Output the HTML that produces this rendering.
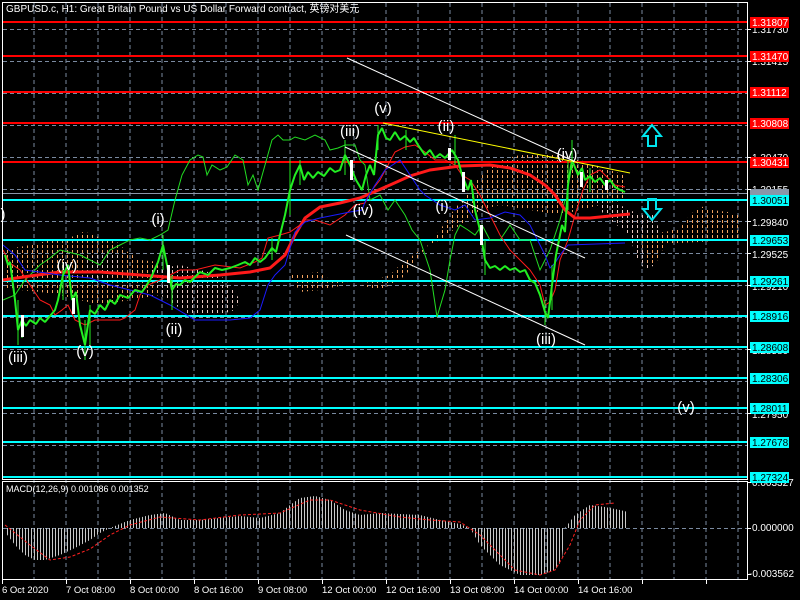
<!DOCTYPE html>
<html><head><meta charset="utf-8"><style>
html,body{margin:0;padding:0;background:#000;width:800px;height:600px;overflow:hidden}
svg{display:block}
text{font-family:"Liberation Sans","Noto Sans CJK SC",sans-serif}
</style></head><body>
<svg width="800" height="600" viewBox="0 0 800 600" xmlns="http://www.w3.org/2000/svg">
<defs>
<pattern id="cl" width="5" height="5" patternUnits="userSpaceOnUse"><line x1="2.5" y1="0" x2="2.5" y2="3" stroke="#f4a460" stroke-width="1"/></pattern>
<pattern id="cl2" width="5" height="5" patternUnits="userSpaceOnUse"><line x1="2.5" y1="0" x2="2.5" y2="3" stroke="#e8c8c0" stroke-width="1"/></pattern>
<pattern id="hs" width="3" height="4" patternUnits="userSpaceOnUse"><line x1="1.5" y1="0" x2="1.5" y2="4" stroke="#c8c8c8" stroke-width="1"/></pattern>
</defs>
<rect width="800" height="600" fill="#000"/>
<g stroke="#7a8aa0" stroke-width="1" stroke-dasharray="4,3">
<path d="M34 3V579M66 3V579M98 3V579M130 3V579M162 3V579M194 3V579M226 3V579M258 3V579M290 3V579M322 3V579M354 3V579M386 3V579M418 3V579M450 3V579M482 3V579M514 3V579M546 3V579M578 3V579M610 3V579M642 3V579M674 3V579M706 3V579M738 3V579"/>
<path d="M3 29.5H747M3 61.5H747M3 93.5H747M3 125.5H747M3 157.5H747M3 189.5H747M3 221.5H747M3 253.5H747M3 285.5H747M3 317.5H747M3 349.5H747M3 381.5H747M3 413.5H747M3 445.5H747M3 528.5H747"/>
</g>
<g>
<polygon fill="url(#cl)" points="3,250 30,245 50,240 70,238 80,232 90,233 100,238 115,240 125,250 140,260 160,262 165,275 160,295 130,300 100,305 80,300 60,295 40,292 20,290 3,288"/>
<polygon fill="url(#cl2)" points="85,258 105,252 118,253 120,265 110,280 95,285 85,275"/>
<polygon fill="url(#cl2)" points="150,270 180,265 200,270 220,275 230,285 240,300 235,310 210,318 190,315 175,305 160,295"/>
<polygon fill="url(#cl)" points="290,275 320,272 330,280 360,285 380,290 400,280 410,270 420,255 440,230 450,215 470,190 480,175 500,160 520,155 560,155 580,160 610,170 625,175 625,200 600,205 580,210 560,215 530,210 500,205 480,210 460,225 440,240 420,250 400,265 390,275 370,282 345,285 320,290 300,292"/>
<polygon fill="url(#cl2)" points="595,200 620,205 640,215 655,215 660,235 655,265 645,270 635,255 630,235 610,220 600,210"/>
<polygon fill="url(#cl)" points="640,235 665,232 680,228 690,215 700,206 712,210 728,212 740,215 740,238 725,240 700,242 680,243 665,245 655,265 645,262"/>
</g>
<g stroke="#ff0000" stroke-width="2">
<path d="M3 22H747M3 56H747M3 92H747M3 123H747M3 162H747"/>
</g>
<path d="M3 193.5H747" stroke="#8a96a8" stroke-width="1"/>
<g stroke="#00ffff" stroke-width="2">
<path d="M3 200H747M3 240H747M3 281H747M3 316H747M3 347H747M3 378H747M3 408H747M3 442H747M3 477H747"/>
</g>
<polyline fill="none" stroke="#22dd22" stroke-width="1" points="3,300 15,295 25,280 40,265 50,258 60,250 80,255 100,265 110,250 120,245 130,240 140,238 150,240 160,235 168,230 175,200 182,175 190,160 198,155 203,157 207,175 212,165 220,170 227,167 235,155 243,160 248,185 253,175 258,190 265,165 272,140 278,135 283,140 290,140 295,137 305,140 315,135 325,140 330,150 338,148 345,145 355,145 360,160 365,165 370,200 380,195 388,210 395,200 405,215 412,230 420,240 430,270 437,317 445,290 450,260 455,235 460,225 468,230 475,235 482,225 490,240 500,240 510,225 520,240 530,240 540,270 550,250 560,220 565,200"/>
<polyline fill="none" stroke="#ff1a1a" stroke-width="3" points="3,280 30,276 60,272 100,272 140,275 180,278 220,275 250,272 270,268 285,255 295,235 305,218 320,207 340,203 360,198 390,185 410,176 430,170 460,166 490,165 510,168 530,175 545,185 555,195 565,210 575,218 590,218 610,216 630,214"/>
<polyline fill="none" stroke="#ff1a1a" stroke-width="1" points="3,250 10,263 20,270 30,285 40,300 50,305 55,315 62,310 68,305 75,320 85,325 95,320 120,320 125,318 135,310 140,295 148,285 160,280 170,275 180,270 195,270 215,265 240,268 255,262 262,258 268,238 280,235 290,232 300,225 305,220 315,220 330,225 345,215 355,205 365,203 372,190 380,180 388,165 395,152 405,147 415,145 425,152 435,160 445,160 455,165 462,175 470,180 480,195 490,215 500,235 510,250 520,260 530,270 540,285 545,305 550,302 555,290 560,260 568,240 575,215 583,190 590,175 600,170 605,175 615,185 625,187"/>
<polyline fill="none" stroke="#1a1aff" stroke-width="1" points="3,245 15,255 25,270 60,275 90,278 110,285 130,290 150,295 170,305 195,320 230,320 250,318 260,310 268,285 275,275 285,265 295,232 305,222 320,218 335,215 350,212 362,210 365,202 375,185 385,170 400,160 420,190 425,195 440,205 455,210 465,205 475,220 490,218 505,212 520,215 530,225 540,245 545,255 550,268 555,263 560,255 568,245 625,243"/>
<polyline fill="none" stroke="#22ee22" stroke-width="2" stroke-linejoin="bevel" points="5,255 8,265 10,262 15,300 18,330 22,320 26,326 30,320 36,324 40,318 45,322 50,316 55,310 58,300 63,275 68,265 72,300 76,292 80,325 85,345 90,310 95,314 100,305 105,310 110,300 115,304 120,295 128,298 135,290 142,292 150,280 158,262 163,245 168,270 172,290 176,284 180,285 185,280 190,282 200,272 208,275 215,268 222,270 230,268 238,265 245,262 250,265 255,258 260,262 265,258 272,248 276,252 280,235 285,215 290,190 295,175 300,165 304,180 308,172 313,178 318,172 324,176 330,168 335,172 340,170 345,155 350,165 356,180 362,190 366,175 370,165 374,175 378,135 382,128 386,138 390,140 395,132 400,140 405,136 410,142 414,138 418,145 425,155 430,150 435,158 440,154 445,158 452,150 458,160 462,175 468,190 471,180 475,210 480,230 485,260 490,268 495,266 500,270 505,266 510,270 515,268 520,272 525,270 530,280 535,283 540,295 545,312 548,318 552,285 556,255 562,225 565,232 568,185 572,160 578,175 582,168 585,180 590,176 595,182 600,178 605,185 610,180 615,187 620,190 625,192"/>
<g stroke="#22ee22" stroke-width="1"><path d="M18 300V345M22 315V338M63 262V300M85 320V360M90 305V345M163 235V270M172 275V310M290 160V215M345 140V175M378 125V150M455 135V165M485 240V275M545 300V325M552 265V310M572 140V170M568 160V210M272 238V260M300 160V185M406 130V150M590 168V192"/></g>
<g fill="#fff"><rect x="21" y="315" width="3" height="22"/><rect x="167" y="265" width="3" height="18"/><rect x="350" y="160" width="3" height="20"/><rect x="448" y="148" width="3" height="12"/><rect x="462" y="172" width="3" height="20"/><rect x="480" y="225" width="3" height="20"/><rect x="580" y="172" width="3" height="15"/><rect x="605" y="180" width="3" height="10"/><rect x="72" y="298" width="3" height="16"/></g>
<g stroke="#fff" stroke-width="1">
<line x1="347" y1="58" x2="578" y2="163"/>
<line x1="345" y1="147" x2="585" y2="258"/>
<line x1="346" y1="235" x2="585" y2="345"/>
</g>
<line x1="383" y1="123" x2="630" y2="173" stroke="#ffff00" stroke-width="1"/>
<g fill="none" stroke="#00e5ee" stroke-width="2">
<polygon points="652,125 661,136 656,136 656,146 648,146 648,136 643,136"/>
<polygon points="652,220 661,209 656,209 656,199 648,199 648,209 643,209"/>
</g>
<g fill="#fff" font-size="15" text-anchor="middle">
<text x="383" y="113">(v)</text><text x="350" y="136">(iii)</text><text x="446" y="131">(ii)</text>
<text x="567" y="159">(iv)</text><text x="442" y="211">(i)</text><text x="363" y="215">(iv)</text>
<text x="158" y="224">(i)</text><text x="174" y="334">(ii)</text><text x="67" y="270">(iv)</text>
<text x="18" y="362">(iii)</text><text x="85" y="356">(v)</text><text x="546" y="344">(iii)</text>
<text x="686" y="412">(v)</text><text x="3" y="219">)</text>
</g>
<text x="6" y="12" fill="#fff" font-size="10">GBPUSD.c, H1:  Great Britain Pound vs US Dollar Forward contract, 英镑对美元</text>
<polygon fill="url(#hs)" points="5,528 5,532 15,545 25,555 35,560 45,560 60,555 75,548 90,540 100,533 110,528 130,520 150,515 165,513 180,520 200,520 220,518 240,516 260,518 280,513 290,505 300,498 315,496 330,500 345,510 360,515 380,513 400,514 420,515 440,520 460,524 470,528 480,545 500,565 520,575 540,575 555,570 562,560 565,528 575,515 590,505 605,507 620,510 628,512 628,528"/>
<polyline fill="none" stroke="#ff2020" stroke-width="1" stroke-dasharray="3,2" points="5,525 30,545 50,560 70,557 90,549 110,535 130,525 160,517 200,520 240,515 280,513 310,500 330,500 360,510 400,517 430,520 460,522 480,535 500,555 515,570 540,575 555,570 570,545 580,520 595,505 615,503"/>
<text x="6" y="492" fill="#fff" font-size="9">MACD(12,26,9) 0.001086 0.001352</text>
<g fill="none" stroke="#fff" stroke-width="1">
<path d="M2.5 2.5V479.5H747.5V2.5Z"/>
<path d="M2.5 481.5V579.5H747.5V481.5Z"/>
</g>
<g font-size="10" text-anchor="start">
<g fill="#fff"><text x="752" y="33">1.31730</text><text x="752" y="65">1.31415</text><text x="752" y="161">1.30470</text><text x="752" y="193">1.30155</text><text x="752" y="226">1.29840</text><text x="752" y="258">1.29525</text><text x="752" y="290">1.29210</text><text x="752" y="354">1.28580</text><text x="752" y="418">1.27950</text><text x="752" y="486">0.003327</text><text x="752" y="531">0.000000</text><text x="749" y="577">-0.003562</text></g>
<g fill="#ff0000"><rect x="750" y="17" width="39" height="11"/><rect x="750" y="51" width="39" height="11"/><rect x="750" y="87" width="39" height="11"/><rect x="750" y="118" width="39" height="11"/><rect x="750" y="157" width="39" height="11"/></g>
<rect x="750" y="189" width="39" height="9" fill="#8a96a8"/>
<g fill="#00ffff"><rect x="750" y="195" width="39" height="11"/><rect x="750" y="235" width="39" height="11"/><rect x="750" y="276" width="39" height="11"/><rect x="750" y="311" width="39" height="11"/><rect x="750" y="342" width="39" height="11"/><rect x="750" y="373" width="39" height="11"/><rect x="750" y="403" width="39" height="11"/><rect x="750" y="437" width="39" height="11"/><rect x="750" y="472" width="39" height="11"/></g>
<g fill="#fff"><text x="752" y="26">1.31807</text><text x="752" y="60">1.31470</text><text x="752" y="96">1.31112</text><text x="752" y="127">1.30808</text><text x="752" y="166">1.30431</text></g>
<g fill="#000"><text x="752" y="204">1.30051</text><text x="752" y="244">1.29653</text><text x="752" y="285">1.29261</text><text x="752" y="320">1.28916</text><text x="752" y="351">1.28608</text><text x="752" y="382">1.28306</text><text x="752" y="412">1.28011</text><text x="752" y="446">1.27678</text><text x="752" y="481">1.27324</text></g>
</g>
<g stroke="#fff"><path d="M747 29.5h4M747 61.5h4M747 157.5h4M747 189.5h4M747 221.5h4M747 253.5h4M747 285.5h4M747 349.5h4M747 413.5h4M747 482.5h4M747 528.5h4M747 574.5h4"/></g>
<g fill="#fff" font-size="9.5">
<text x="2" y="593">6 Oct 2020</text><text x="66" y="593">7 Oct 08:00</text><text x="130" y="593">8 Oct 00:00</text><text x="194" y="593">8 Oct 16:00</text><text x="258" y="593">9 Oct 08:00</text><text x="322" y="593">12 Oct 00:00</text><text x="386" y="593">12 Oct 16:00</text><text x="450" y="593">13 Oct 08:00</text><text x="514" y="593">14 Oct 00:00</text><text x="578" y="593">14 Oct 16:00</text>
</g>
<g stroke="#fff"><path d="M2.5 580v4M66.5 580v4M130.5 580v4M194.5 580v4M258.5 580v4M322.5 580v4M386.5 580v4M450.5 580v4M514.5 580v4M578.5 580v4M642.5 580v4M706.5 580v4"/></g>
</svg>
</body></html>
